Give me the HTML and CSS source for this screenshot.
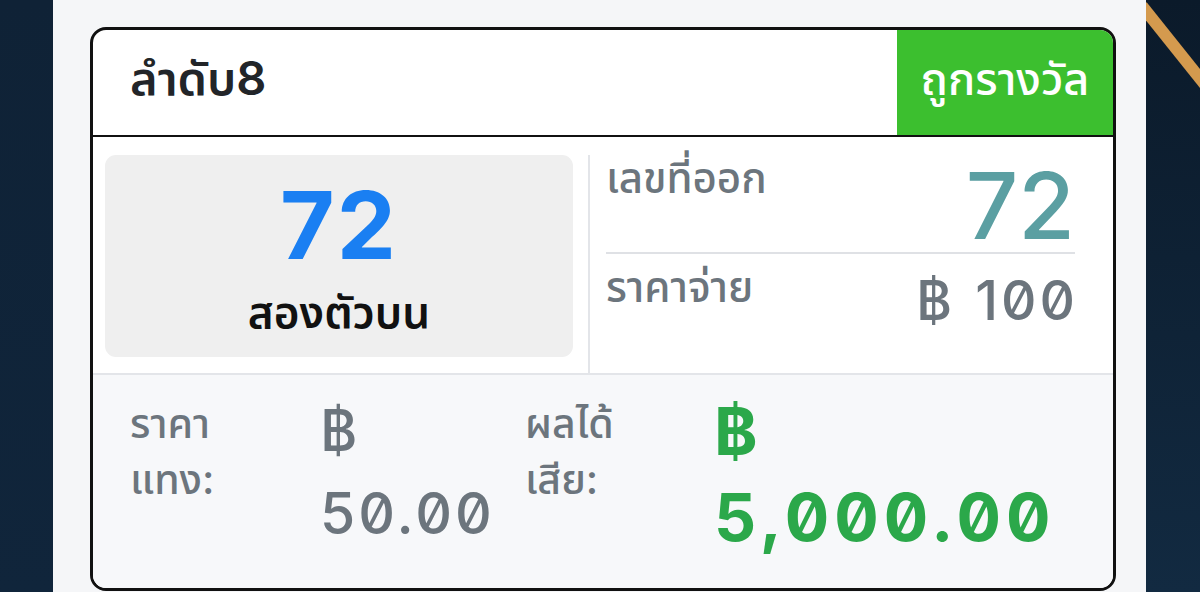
FILE: index.html
```html
<!DOCTYPE html>
<html lang="th">
<head>
<meta charset="utf-8">
<link rel="stylesheet" href="styles.css">
</head>
<body>
<div class="page">
  <aside class="side side-left"></aside>
  <main class="center">
    <section class="card">
      <header class="card-head">
        <div class="head-title">ลำดับ8</div>
        <div class="head-badge">ถูกรางวัล</div>
      </header>
      <div class="card-mid">
        <div class="mid-left">
          <div class="num-box">
            <div class="num-big">72</div>
            <div class="num-type">สองตัวบน</div>
          </div>
        </div>
        <div class="mid-right">
          <div class="info-row info-row-top">
            <div class="info-label">เลขที่ออก</div>
            <div class="info-result">72</div>
          </div>
          <div class="info-row">
            <div class="info-label">ราคาจ่าย</div>
            <div class="info-pay"><span class="pay-baht">฿</span>100</div>
          </div>
        </div>
      </div>
      <div class="card-foot">
        <div class="foot-label"><span>ราคา</span><span>แทง:</span></div>
        <div class="foot-value"><span class="baht">฿</span><span class="amount">50.00</span></div>
        <div class="foot-label"><span>ผลได้</span><span>เสีย:</span></div>
        <div class="foot-value foot-win"><span class="baht">฿</span><span class="amount">5,000.00</span></div>
      </div>
    </section>
  </main>
  <aside class="side side-right">
    <svg class="stripe" width="54" height="592" viewBox="0 0 54 592" aria-hidden="true">
      <line x1="-4" y1="6" x2="60" y2="86" stroke="#d49a4e" stroke-width="12"/>
    </svg>
  </aside>
</div>
</body>
</html>
```

FILE: styles.css
```css
* { box-sizing: border-box; }
html, body {
  margin: 0;
  padding: 0;
  width: 1200px;
  height: 592px;
  overflow: hidden;
}
body {
  font-family: Inter, "Noto Sans Thai", "Noto Sans", "DejaVu Sans", sans-serif;
  font-variant-numeric: slashed-zero;
  font-feature-settings: "zero" 1;
  color: #212529;
}
.page {
  display: flex;
  width: 1200px;
  height: 592px;
}
.side {
  background: #0f2338;
  flex: none;
}
.side-left {
  width: 53px;
  background: linear-gradient(180deg, #0f2236 0%, #10253b 100%);
}
.side-right {
  width: 54px;
  background: linear-gradient(180deg, #0b1a2a 0%, #122a41 100%);
  overflow: hidden;
}
.stripe { display: block; }
.center {
  flex: 1;
  background: #f5f6f8;
  padding: 27px 30px 0 37px;
}
.card {
  width: 1026px;
  height: 564px;
  border: 3px solid #111;
  border-radius: 16px;
  overflow: hidden;
  background: #fff;
  display: flex;
  flex-direction: column;
}
.card-head {
  height: 107px;
  flex: none;
  display: flex;
  border-bottom: 2px solid #111;
}
.head-title {
  flex: 1;
  display: flex;
  align-items: center;
  padding-left: 37px;
  font-size: 47px;
  font-weight: 600;
  color: #222529;
  padding-bottom: 4px;
}
.head-badge {
  width: 216px;
  background: #3cbf2f;
  color: #fff;
  display: flex;
  align-items: center;
  justify-content: center;
  font-size: 45px;
  font-weight: 500;
  padding-bottom: 4px;
}
.card-mid {
  height: 238px;
  flex: none;
  display: flex;
  padding-top: 18px;
  border-bottom: 2px solid #e3e5e9;
}
.mid-left {
  width: 495px;
  padding: 0 15px 15px 12px;
}
.num-box {
  height: 202px;
  background: #efefef;
  border-radius: 11px;
  display: flex;
  flex-direction: column;
  align-items: center;
  justify-content: center;
}
.num-big {
  font-size: 94px;
  font-weight: 700;
  color: #1a7ff2;
  line-height: 1;
  margin-top: 4px;
  letter-spacing: 2px;
}
.num-type {
  font-size: 44px;
  font-weight: 600;
  color: #111;
  line-height: 1.2;
  margin-top: 14px;
}
.mid-right {
  flex: 1;
  border-left: 2px solid #e3e5e9;
  padding: 0 38px 0 16px;
  display: flex;
  flex-direction: column;
}
.info-row {
  display: flex;
  justify-content: space-between;
  align-items: flex-start;
  color: #6c757d;
}
.info-row-top {
  height: 99px;
  border-bottom: 2px solid #dfe1e5;
}
.info-label {
  font-size: 42px;
  font-weight: 500;
  line-height: 1.3;
}
.info-row-top .info-label { margin-top: -4px; }
.info-row:not(.info-row-top) .info-label { margin-top: 6px; }
.info-result {
  font-size: 92px;
  font-weight: 500;
  color: #5b9fa2;
  line-height: 1;
  margin-top: 5px;
}
.info-pay {
  font-size: 55px;
  font-weight: 500;
  line-height: 1;
  margin-top: 19px;
  letter-spacing: 3px;
  margin-right: -3px;
}
.pay-baht {
  margin-right: 20px;
}
.card-foot {
  flex: 1;
  background: #f7f8fa;
  display: grid;
  grid-template-columns: 190px 205px 189px 1fr;
  padding: 20px 0 0 37px;
  color: #6c757d;
}
.foot-label {
  display: flex;
  flex-direction: column;
  font-size: 41px;
  font-weight: 500;
  line-height: 56px;
}
.foot-value {
  display: flex;
  flex-direction: column;
  font-size: 57px;
  font-weight: 500;
}
.foot-value .baht {
  line-height: 72px;
}
.foot-value .amount {
  line-height: 1;
  margin-top: 18px;
  letter-spacing: 3px;
}
.foot-win {
  color: #2ba84a;
  font-weight: 700;
  font-size: 66px;
}
.foot-win .baht {
  font-size: 66px;
  line-height: 72px;
}
.foot-win .amount {
  letter-spacing: 5px;
  margin-top: 17px;
}
```
